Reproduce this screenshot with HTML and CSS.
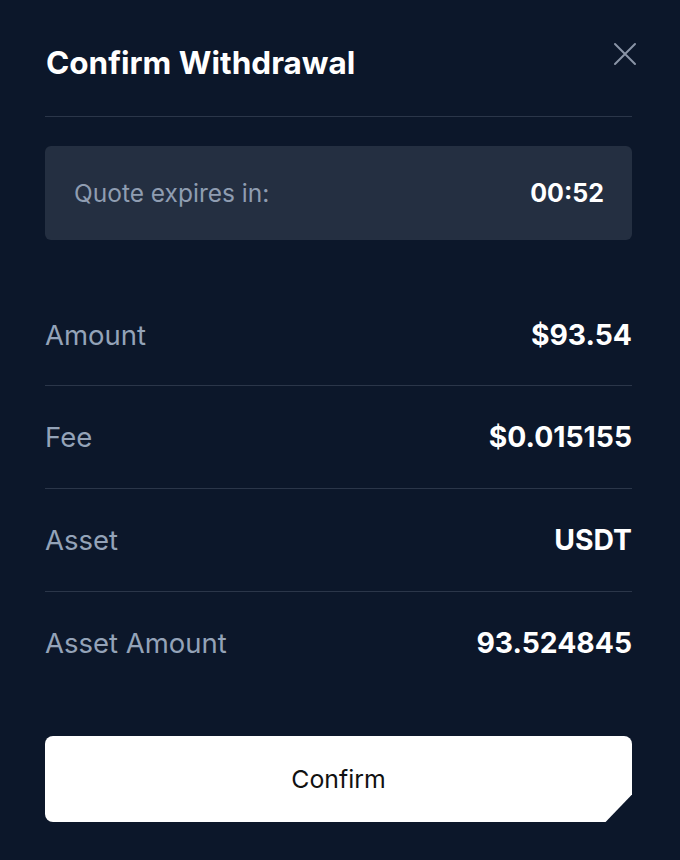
FILE: index.html
```html
<!DOCTYPE html>
<html lang="en">
<head>
<meta charset="utf-8">
<title>Confirm Withdrawal</title>
<link rel="stylesheet" href="styles.css">
</head>
<body>
<div class="modal">
  <div class="header">
    <h1 class="title">Confirm Withdrawal</h1>
    <button class="close" aria-label="Close">
      <svg width="24" height="24" viewBox="0 0 24 24" fill="none" stroke="#8a94a6" stroke-width="2" stroke-linecap="round"><path d="M2 2 L22 22 M22 2 L2 22"/></svg>
    </button>
  </div>
  <div class="quote">
    <span class="quote-label">Quote expires in:</span>
    <span class="quote-time">00:52</span>
  </div>
  <div class="rows">
    <div class="row"><span class="label">Amount</span><span class="value">$93.54</span></div>
    <div class="row"><span class="label">Fee</span><span class="value">$0.015155</span></div>
    <div class="row"><span class="label">Asset</span><span class="value">USDT</span></div>
    <div class="row"><span class="label">Asset Amount</span><span class="value">93.524845</span></div>
  </div>
  <button class="confirm">Confirm</button>
</div>
</body>
</html>
```
FILE: styles.css
```css
html, body {
  margin: 0;
  padding: 0;
  background: #0c172a;
  width: 680px;
  height: 860px;
  overflow: hidden;
}
body {
  font-family: Inter, "Noto Sans", sans-serif;
  color: #ffffff;
}
.modal {
  padding: 0 48px 0 45px;
}
.header {
  display: flex;
  justify-content: space-between;
  align-items: flex-start;
  height: 116px;
  border-bottom: 1px solid #2b3649;
}
.title {
  margin: 43px 0 0 1px;
  font-size: 31.5px;
  font-weight: 700;
  line-height: 40px;
  letter-spacing: 0;
}
.close {
  margin: 42px -5px 0 0;
  padding: 0;
  background: none;
  border: none;
  width: 24px;
  height: 24px;
  display: flex;
}
.quote {
  margin-top: 29px;
  height: 94px;
  background: #242f41;
  border-radius: 6px;
  display: flex;
  align-items: center;
  justify-content: space-between;
  padding: 0 28px 0 29px;
}
.quote-label {
  font-size: 24.5px;
  color: #8f9db1;
}
.quote-time {
  font-size: 25px;
  font-weight: 700;
  color: #ffffff;
}
.rows {
  margin-top: 44px;
}
.row {
  height: 102px;
  display: flex;
  align-items: center;
  justify-content: space-between;
  border-bottom: 1px solid #2b3649;
}
.row:last-child {
  border-bottom: none;
}
.row:first-child {
  height: 101px;
}
.label {
  font-size: 27.5px;
  color: #94a3b8;
  font-weight: 400;
}
.value {
  font-size: 28.3px;
  font-weight: 700;
  color: #ffffff;
}
.confirm {
  display: block;
  width: 100%;
  height: 86px;
  margin-top: 42px;
  border: none;
  background: #ffffff;
  border-radius: 8px;
  clip-path: polygon(0 0, 100% 0, 100% 68%, 95.5% 100%, 0 100%);
  font-family: Inter, "Noto Sans", sans-serif;
  font-size: 24.8px;
  color: #111111;
  padding: 0;
}
```
